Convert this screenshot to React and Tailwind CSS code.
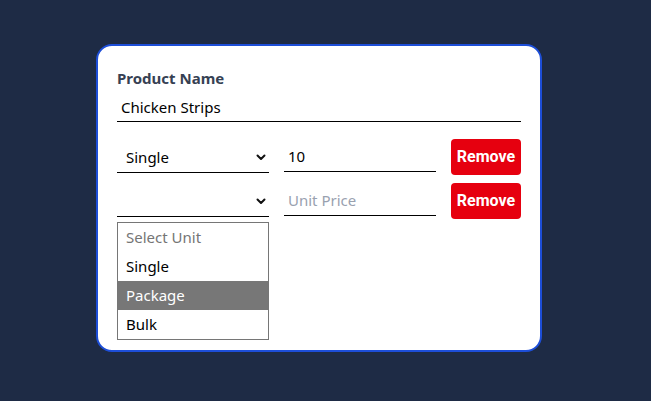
import React from 'react';

const Chevron = () => (
  <svg width="10" height="7" viewBox="0 0 10 7" fill="none">
    <path d="M1.5 1.5 L5 5 L8.5 1.5" stroke="#111" strokeWidth="2" strokeLinecap="round" strokeLinejoin="round" />
  </svg>
);

const UnitRow = ({ unit, price }) => (
  <div className="flex items-start gap-[15px]">
    <div className="flex h-[34px] w-[152px] items-center justify-between border-b border-black pl-[9px] pr-[3px] pt-[3px] text-[15px] text-black">
      <span>{unit}</span>
      <Chevron />
    </div>
    <div className="flex h-[33px] w-[152px] items-center border-b border-black px-1 pt-[3px] text-[15px]">
      {price ? <span className="text-black">{price}</span> : <span className="text-gray-400">Unit Price</span>}
    </div>
    <button className="h-[36px] w-[70px] rounded bg-[#e6000f] text-[16px] font-bold text-white" style={{ fontFamily: 'Roboto, sans-serif' }}>
      Remove
    </button>
  </div>
);

const options = ['Select Unit', 'Single', 'Package', 'Bulk'];

export default function App() {
  return (
    <div className="min-h-screen bg-[#1e2b45] pl-[96px] pt-[44px]" style={{ fontFamily: '"Noto Sans", "Open Sans", sans-serif' }}>
      <div className="relative h-[308px] w-[446px] rounded-2xl border-2 border-[#1d4ed8] bg-white px-[19px] pt-[22px]">
        <label className="block text-[15px] font-bold leading-5 text-gray-700">Product Name</label>
        <div className="mt-1 flex h-[30px] items-center border-b border-black px-1 pt-[2px] text-[15px] text-black">
          Chicken Strips
        </div>
        <div className="mt-[17px] flex flex-col gap-2">
          <UnitRow unit="Single" price="10" />
          <UnitRow unit="" price="" />
        </div>
        <ul className="absolute left-[19px] top-[176px] w-[152px] border border-[#767676] bg-white text-[15px]">
          {options.map((o, i) => (
            <li
              key={o}
              className={
                'flex h-[29px] items-center pl-2 ' +
                (i === 0 ? 'text-[#757575]' : o === 'Package' ? 'bg-[#777777] text-white' : 'text-black')
              }
            >
              {o}
            </li>
          ))}
        </ul>
      </div>
    </div>
  );
}
